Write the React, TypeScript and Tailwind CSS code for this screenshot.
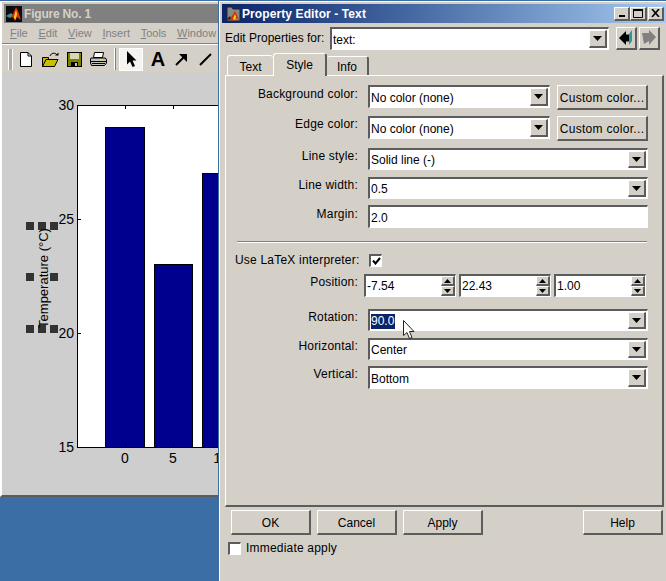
import React from "react";

const sunken = "border-t-2 border-l-2 border-t-[#5c5c5c] border-l-[#5c5c5c] border-b border-r border-b-white border-r-white bg-white";
const raised = "border-t border-l border-t-white border-l-white border-b-2 border-r-2 border-b-[#5c5c5c] border-r-[#5c5c5c] bg-[#d4d0c8]";

const MatlabLogo: React.FC<{ className: string }> = ({ className }) => (
  <svg viewBox="0 0 16 16" className={className}>
    <rect width="16" height="16" fill="#0c0c0c" />
    <path d="M0 10 L5 7 L7 9 L4 12 Z" fill="#3f8f9f" />
    <path d="M4 12 L7 8 L10 1 L12 5 L15 14 L11 11 L9 15 L7 11 Z" fill="#e03010" />
    <path d="M8 11 L10 4 L11 8 L10 12 L9 14 Z" fill="#ffd800" />
  </svg>
);

const EditorLogo: React.FC = () => (
  <svg viewBox="0 0 15 16" className="h-[16px] w-[15px]">
    <path d="M1 3V1H6L7 3H14V15H1Z" fill="#8a8a84" stroke="#222" />
    <path d="M3 14L6 10L9 5L11 9L13 14L10 12L8 15Z" fill="#d83010" />
    <path d="M7 13L9 8L10 11L9 14Z" fill="#ffd800" />
    <path d="M1 13L4 10L5 12L3 14Z" fill="#223" />
  </svg>
);

const DownArrow: React.FC = () => (
  <svg width="9" height="5" viewBox="0 0 9 5"><path d="M0 0H9L4.5 5Z" fill="#000" /></svg>
);

const Combo: React.FC<{ className: string; children?: React.ReactNode; arrow?: boolean }> = ({ className, children, arrow = true }) => (
  <div className={`${sunken} ${className} flex shrink-0 items-stretch`}>
    <div className="flex min-w-0 flex-1 items-center pl-[1px] pt-[1px]">{children}</div>
    {arrow && (
      <div className={`${raised} my-[1px] mr-[1px] flex w-[18px] items-center justify-center`}>
        <DownArrow />
      </div>
    )}
  </div>
);

const Spinner: React.FC<{ value: string }> = ({ value }) => (
  <div className={`${sunken} flex h-[23px] w-[92px] shrink-0 items-stretch`}>
    <div className="flex flex-1 items-center pl-[1px]">{value}</div>
    <div className="flex w-[14px] flex-col">
      {[0, 1].map((i) => (
        <div key={i} className={`${raised} flex flex-1 items-center justify-center`}>
          <svg width="7" height="4" viewBox="0 0 7 4">
            <path d={i === 0 ? "M0 4H7L3.5 0Z" : "M0 0H7L3.5 4Z"} fill="#000" />
          </svg>
        </div>
      ))}
    </div>
  </div>
);

const Label: React.FC<{ children: React.ReactNode; pad?: string }> = ({ children, pad = "pt-[1px]" }) => (
  <div className={`${pad} w-[132px] shrink-0 text-right tracking-[0.2px]`}>{children}</div>
);

const WinButton: React.FC<{ className: string; children: React.ReactNode }> = ({ className, children }) => (
  <div className={`${raised} ${className} flex items-center justify-center`}>{children}</div>
);

const CustomColor: React.FC = () => (
  <div className={`${raised} ml-[7px] flex h-[25px] w-[91px] items-center justify-center pt-[1px] tracking-[0.3px]`}>Custom color...</div>
);

const FigureToolbar: React.FC = () => (
  <div className="flex h-[28px] items-center bg-[#d4d0c8] pl-[6px]">
    <div className="h-[21px] w-[5px] border-x border-x-white bg-[#b0aca4]" />
    <svg className="ml-[7px]" width="12" height="15" viewBox="0 0 12 15">
      <path d="M.5.5H8L11.5 4V14.5H.5Z" fill="#fff" stroke="#000" />
      <path d="M8 .5V4H11.5" fill="none" stroke="#000" />
    </svg>
    <svg className="ml-[10px]" width="17" height="15" viewBox="0 0 17 15">
      <path d="M.5 5.5H6.5V14.5H.5Z" fill="#c8b400" stroke="#000" />
      <path d="M.5 14.5L4 7.5H16L12.5 14.5Z" fill="#c8c000" stroke="#000" />
      <path d="M8 4C9 1 13 0 15 3" fill="none" stroke="#000" />
      <path d="M13 3.5H16.5V0.5Z" fill="#000" />
    </svg>
    <svg className="ml-[8px]" width="15" height="15" viewBox="0 0 15 15">
      <rect x=".5" y=".5" width="14" height="14" fill="#808000" stroke="#000" />
      <rect x="3" y="1" width="9" height="6" fill="#d8d8b0" />
      <rect x="4" y="10" width="7" height="4" fill="#000" />
      <rect x="8" y="11" width="2" height="3" fill="#c8c8a0" />
    </svg>
    <svg className="ml-[8px]" width="17" height="14" viewBox="0 0 17 14">
      <path d="M4.5.5H13.5L12.5 5.5H3.5Z" fill="#fff" stroke="#000" />
      <path d="M1 6H15.5L16.5 8V11L14.5 13.5H1.5L.5 11V7Z" fill="#c0c0c0" stroke="#000" />
      <path d="M1 9.5H16M2 11.5H15" stroke="#000" />
      <rect x="10" y="7" width="3" height="1.5" fill="#ffe000" />
    </svg>
    <div className="ml-[7px] h-[22px] w-[2px] border-l border-l-white bg-[#808080]" />
    <div className="ml-[3px] flex h-[23px] w-[24px] items-center justify-center border border-white bg-[#f4f3f0]">
      <svg width="11" height="16" viewBox="0 0 11 16">
        <path d="M1 0L10.5 9.5H6.5L9 15L6.5 16L4 10.5L1 13.5Z" fill="#000" />
      </svg>
    </div>
    <span className="ml-[7px] w-[16px] text-center text-[20px] font-bold leading-none">A</span>
    <svg className="ml-[9px]" width="13" height="13" viewBox="0 0 13 13">
      <path d="M1 12L10 3" stroke="#000" strokeWidth="2" />
      <path d="M4 1H12V9Z" fill="#000" />
    </svg>
    <svg className="ml-[11px]" width="13" height="13" viewBox="0 0 13 13">
      <path d="M1 12L12 1" stroke="#000" strokeWidth="2" />
    </svg>
  </div>
);

// plot uses page coordinates through its viewBox
const Plot: React.FC = () => (
  <svg viewBox="2 73 216 422" className="h-[422px] w-[216px] text-[14px]">
    <rect x="2" y="73" width="216" height="422" fill="#cecece" />
    <rect x="77.5" y="105.5" width="160" height="342" fill="#fff" stroke="#000" />
    <rect x="105.5" y="127.5" width="39" height="320" fill="#00008f" stroke="#000" />
    <rect x="154.5" y="264.5" width="38" height="183" fill="#00008f" stroke="#000" />
    <rect x="202.5" y="173.5" width="38" height="274" fill="#00008f" stroke="#000" />
    {[219.5, 333.5].map((y) => (
      <path key={y} d={`M77 ${y}H81`} stroke="#000" />
    ))}
    {[125.5, 173.5].map((x) => (
      <path key={x} d={`M${x} 105V109M${x} 447V443`} stroke="#000" />
    ))}
    {[
      ["30", 110],
      ["25", 224],
      ["20", 338],
      ["15", 452],
    ].map(([t, y]) => (
      <text key={t} x="74" y={y} textAnchor="end" fill="#000">{t}</text>
    ))}
    <text x="125" y="463" textAnchor="middle" fill="#000">0</text>
    <text x="173" y="463" textAnchor="middle" fill="#000">5</text>
    <text x="221" y="463" textAnchor="middle" fill="#000">10</text>
    {[
      [26, 222], [38, 222], [50, 222],
      [26, 273], [50, 273],
      [26, 325], [38, 325], [50, 325],
    ].map(([x, y]) => (
      <rect key={`${x}-${y}`} x={x} y={y} width="8" height="8" fill="#333" />
    ))}
    <text x="47.5" y="278" textAnchor="middle" fill="#000" transform="rotate(-90 47.5 278)" className="text-[13px]">Temperature (°C)</text>
  </svg>
);

export default function App() {
  return (
    <div className="relative h-[581px] w-[666px] overflow-hidden bg-[#3a6ea5] font-['Liberation_Sans',Arial,sans-serif] text-[12px] leading-[14px] text-black">
      {/* figure window */}
      <div className="absolute left-0 top-[1px] flex h-[496px] w-[218px] flex-col border-b-2 border-l-2 border-t border-b-[#5c5c5c] border-l-white border-t-white bg-[#d4d0c8]">
        <div className="pl-[2px] pt-[2px]">
          <div className="flex h-[19px] items-center bg-[#808080] pl-[2px] text-[12px] font-bold tracking-[-0.2px] text-[#d4d0c8]">
            <MatlabLogo className="h-[16px] w-[16px]" />
            <span className="ml-[2px] pt-[1px]">Figure No. 1</span>
          </div>
        </div>
        <div className="flex h-[20px] items-center gap-[10.7px] overflow-hidden whitespace-nowrap pl-[8px] text-[11px] text-[#808080]">
          <span><u>F</u>ile</span>
          <span><u>E</u>dit</span>
          <span><u>V</u>iew</span>
          <span><u>I</u>nsert</span>
          <span><u>T</u>ools</span>
          <span><u>W</u>indow</span>
        </div>
        <div className="h-[2px] border-b border-b-white bg-[#808080]" />
        <FigureToolbar />
        <Plot />
      </div>

      {/* property editor */}
      <div className="absolute left-[219px] top-[1px] flex h-[580px] w-[447px] flex-col border-l border-t border-l-white border-t-white bg-[#d4d0c8] pl-[1px]">
        <div className="pl-[1px] pt-[2px]">
          <div className="flex h-[19px] items-center bg-gradient-to-r from-[#0a246a] to-[#a6caf0] pl-[4px] text-[12px] font-bold tracking-[0.1px] text-white">
            <EditorLogo />
            <span className="ml-[1px] pt-[1px]">Property Editor - Text</span>
            <div className="ml-auto flex items-center pr-[2px]">
              <WinButton className="h-[14px] w-[16px]">
                <svg width="8" height="8" viewBox="0 0 8 8"><path d="M1 7H7" stroke="#000" strokeWidth="2" /></svg>
              </WinButton>
              <WinButton className="h-[14px] w-[17px]">
                <svg width="10" height="9" viewBox="0 0 10 9"><path d="M.5 1.5H9.5V8.5H.5Z" fill="none" stroke="#000" /><path d="M0 1H10" stroke="#000" strokeWidth="2" /></svg>
              </WinButton>
              <WinButton className="ml-[1px] h-[14px] w-[16px]">
                <svg width="9" height="8" viewBox="0 0 9 8"><path d="M1 0L8 8M8 0L1 8" stroke="#000" strokeWidth="1.6" /></svg>
              </WinButton>
            </div>
          </div>
        </div>

        <div className="mt-[4px] flex h-[23px] items-center pl-[4px]">
          <span className="w-[105px] shrink-0 whitespace-nowrap pb-[1px]">Edit Properties for:</span>
          <Combo className="h-[23px] w-[279px]">text:</Combo>
          <WinButton className="ml-[7px] h-[23px] w-[21px]">
            <svg width="16" height="18" viewBox="0 0 16 18">
              <path d="M1 9L8 2V16Z" fill="#000" />
              <path d="M7 5.5H12V12.5H7Z" fill="#000" />
              <path d="M11 5L14 1V12L11 16Z" fill="#2a9a9a" />
            </svg>
          </WinButton>
          <WinButton className="ml-[2px] h-[23px] w-[21px]">
            <svg width="16" height="18" viewBox="0 0 16 18">
              <path d="M1 4H8V1L15 8L8 16V12L3 15Z" fill="#808080" />
            </svg>
          </WinButton>
        </div>

        <div className="ml-[6px] mt-[3px] flex h-[22px] items-end">
          <div className="flex h-[20px] w-[46px] items-center justify-center rounded-t-[3px] border-l border-t border-l-white border-t-white pt-[2px]">Text</div>
          <div className="z-10 -mb-px flex h-[23px] w-[54px] items-center justify-center rounded-t-[3px] border-l border-r-2 border-t border-l-white border-r-[#5c5c5c] border-t-white bg-[#d4d0c8]">Style</div>
          <div className="flex h-[19px] w-[42px] items-center justify-center rounded-t-[3px] border-r-2 border-t border-r-[#5c5c5c] border-t-white pt-[2px]">Info</div>
        </div>

        {/* style tab */}
        <div className="ml-[4px] flex h-[432px] w-[439px] flex-col border-b-2 border-l border-r-2 border-t border-b-[#5c5c5c] border-l-white border-r-[#5c5c5c] border-t-white">
          <div className="mt-[9px] flex h-[25px]">
            <Label pad="pt-[2px]">Background color:</Label>
            <Combo className="ml-[10px] h-[23px] w-[182px]">No color (none)</Combo>
            <CustomColor />
          </div>
          <div className="mt-[6px] flex h-[25px]">
            <Label>Edge color:</Label>
            <Combo className="ml-[10px] h-[23px] w-[182px]">No color (none)</Combo>
            <CustomColor />
          </div>
          <div className="mt-[7px] flex h-[22px]">
            <Label>Line style:</Label>
            <Combo className="ml-[10px] h-[22px] w-[280px]">Solid line (-)</Combo>
          </div>
          <div className="mt-[7px] flex h-[22px]">
            <Label>Line width:</Label>
            <Combo className="ml-[10px] h-[22px] w-[280px]">0.5</Combo>
          </div>
          <div className="mt-[6px] flex h-[23px]">
            <Label pad="pt-[2px]">Margin:</Label>
            <Combo className="ml-[10px] h-[23px] w-[280px]" arrow={false}>2.0</Combo>
          </div>

          <div className="ml-[11px] mt-[13px] h-[2px] w-[410px] border-b border-b-white bg-[#808080]" />

          <div className="ml-[9px] mt-[10px] flex h-[14px] items-center">
            <span className="tracking-[0.2px]">Use LaTeX interpreter:</span>
            <div className={`${sunken} ml-[10px] flex h-[13px] w-[13px] items-center justify-center`}>
              <svg width="9" height="8" viewBox="0 0 9 8"><path d="M1 3.5L3.5 6.5L8 1" fill="none" stroke="#000" strokeWidth="2" /></svg>
            </div>
          </div>
          <div className="mt-[7px] flex h-[23px]">
            <Label>Position:</Label>
            <div className="ml-[6px] flex gap-[3px]">
              <Spinner value="-7.54" />
              <Spinner value="22.43" />
              <Spinner value="1.00" />
            </div>
          </div>
          <div className="mt-[12px] flex h-[22px]">
            <Label>Rotation:</Label>
            <Combo className="ml-[10px] h-[22px] w-[280px]">
              <span className="h-[15px] bg-[#0a246a] pr-[1px] leading-[15px] text-white">90.0</span>
            </Combo>
          </div>
          <div className="mt-[7px] flex h-[22px]">
            <Label>Horizontal:</Label>
            <Combo className="ml-[10px] h-[22px] w-[280px]">Center</Combo>
          </div>
          <div className="mt-[6px] flex h-[23px]">
            <Label>Vertical:</Label>
            <Combo className="ml-[10px] h-[23px] w-[280px]">Bottom</Combo>
          </div>
        </div>

        <div className="ml-[10px] mt-[3px] flex h-[25px] gap-[6px]">
          <div className={`${raised} flex w-[80px] items-center justify-center pt-[2px]`}>OK</div>
          <div className={`${raised} flex w-[80px] items-center justify-center pt-[2px]`}>Cancel</div>
          <div className={`${raised} flex w-[80px] items-center justify-center pt-[2px]`}>Apply</div>
          <div className={`${raised} ml-[94px] flex w-[80px] items-center justify-center pt-[2px]`}>Help</div>
        </div>
        <div className="ml-[7px] mt-[6px] flex h-[14px] items-center">
          <div className={`${sunken} h-[13px] w-[13px]`} />
          <span className="ml-[5px] tracking-[0.2px]">Immediate apply</span>
        </div>
      </div>

      {/* mouse cursor */}
      <svg className="absolute left-[403px] top-[320px]" width="13" height="20" viewBox="0 0 13 20">
        <path d="M.5.5V15.5L4 12.5L6.5 18.5L9 17.5L6.5 11.5H11Z" fill="#fff" stroke="#222" />
      </svg>
    </div>
  );
}
